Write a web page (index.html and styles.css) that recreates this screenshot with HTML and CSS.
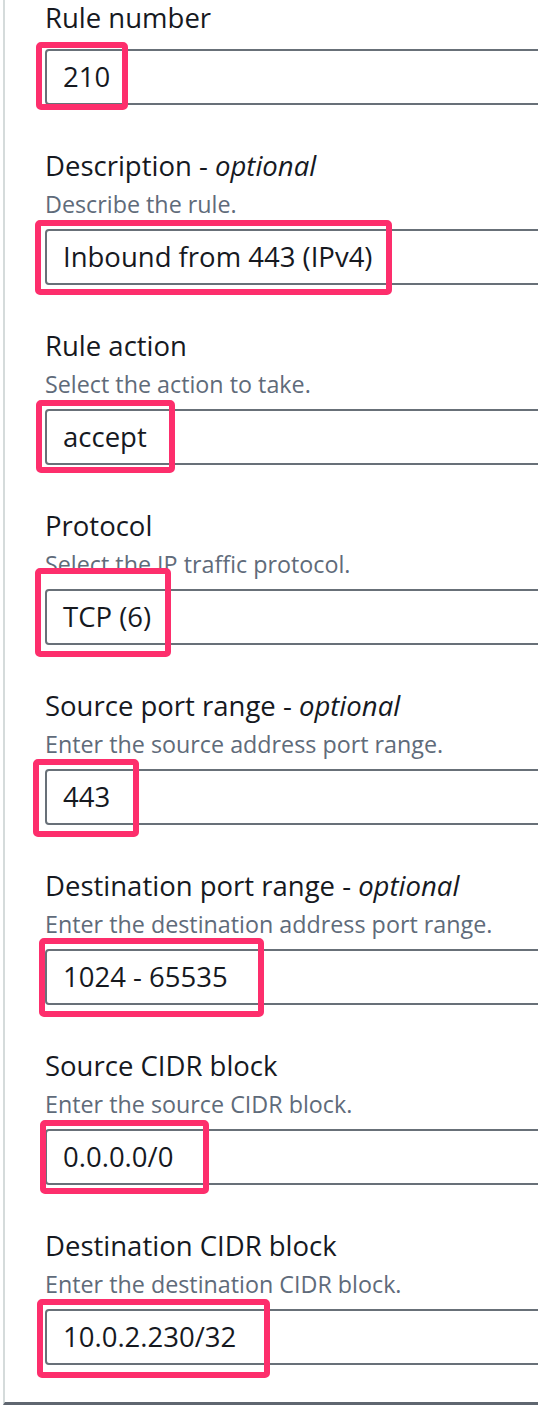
FILE: index.html
```html
<!DOCTYPE html>
<html lang="en">
<head>
<meta charset="utf-8">
<title>Network ACL rule</title>
<link rel="stylesheet" href="styles.css">
</head>
<body>
<div class="panel">
  <form class="form">
    <div class="field field-first">
      <div class="label">Rule number</div>
      <div class="control">
        <div class="input">210</div>
        <span class="mark" style="left:-9px;top:-7px;width:92px;height:68px"></span>
      </div>
    </div>

    <div class="field">
      <div class="label">Description - <i>optional</i></div>
      <div class="hint">Describe the rule.</div>
      <div class="control">
        <div class="input">Inbound from 443 (IPv4)</div>
        <span class="mark" style="left:-10px;top:-9px;width:357px;height:75px"></span>
      </div>
    </div>

    <div class="field">
      <div class="label">Rule action</div>
      <div class="hint">Select the action to take.</div>
      <div class="control">
        <div class="input">accept</div>
        <span class="mark" style="left:-9px;top:-9px;width:139px;height:73px"></span>
      </div>
    </div>

    <div class="field">
      <div class="label">Protocol</div>
      <div class="hint">Select the IP traffic protocol.</div>
      <div class="control">
        <div class="input">TCP (6)</div>
        <span class="mark" style="left:-10px;top:-21px;width:136px;height:89px"></span>
      </div>
    </div>

    <div class="field">
      <div class="label">Source port range - <i>optional</i></div>
      <div class="hint">Enter the source address port range.</div>
      <div class="control">
        <div class="input">443</div>
        <span class="mark" style="left:-12px;top:-10px;width:106px;height:78px"></span>
      </div>
    </div>

    <div class="field">
      <div class="label">Destination port range - <i>optional</i></div>
      <div class="hint">Enter the destination address port range.</div>
      <div class="control">
        <div class="input">1024 - 65535</div>
        <span class="mark" style="left:-6px;top:-11px;width:225px;height:79px"></span>
      </div>
    </div>

    <div class="field">
      <div class="label">Source CIDR block</div>
      <div class="hint">Enter the source CIDR block.</div>
      <div class="control">
        <div class="input">0.0.0.0/0</div>
        <span class="mark" style="left:-5px;top:-9px;width:169px;height:74px"></span>
      </div>
    </div>

    <div class="field">
      <div class="label">Destination CIDR block</div>
      <div class="hint">Enter the destination CIDR block.</div>
      <div class="control">
        <div class="input">10.0.2.230/32</div>
        <span class="mark" style="left:-8px;top:-10px;width:233px;height:79px"></span>
      </div>
    </div>
  </form>
</div>
</body>
</html>
```

FILE: styles.css
```css
html, body {
  margin: 0;
  padding: 0;
  background: #ffffff;
  overflow: hidden;
}

body {
  font-family: "Open Sans", "Noto Sans", Arial, sans-serif;
  color: #16191f;
  width: 538px;
  height: 1405px;
}

.panel {
  box-sizing: border-box;
  height: 1405px;
  margin-left: 3px;
  border-left: 2px solid #d5dbdb;
  border-bottom: 3px solid #5f6670;
  padding-left: 40px;
  padding-top: 1px;
  overflow: hidden;
}

.form {
  display: flex;
  flex-direction: column;
  gap: 44px;
  width: 560px;
}

.field {
  display: flex;
  flex-direction: column;
}

.label {
  font-size: 27.5px;
  font-weight: 500;
  line-height: 34px;
  height: 34px;
  white-space: nowrap;
  color: #16191f;
}

.label i {
  font-style: italic;
}

.hint {
  margin-top: 6px;
  font-size: 23.3px;
  font-weight: 500;
  line-height: 30px;
  height: 30px;
  color: #5f6b7a;
  white-space: nowrap;
}

.control {
  position: relative;
  margin-top: 10px;
}

.field-first .control {
  margin-top: 14px;
}

.input {
  box-sizing: border-box;
  height: 56px;
  border: 2px solid #687078;
  border-radius: 4px;
  padding: 0 16px;
  font-size: 27.5px;
  font-weight: 500;
  line-height: 52px;
  white-space: nowrap;
  color: #16191f;
}

.mark {
  position: absolute;
  box-sizing: border-box;
  border: 6px solid #fd2e6c;
  border-radius: 5px;
}
```
